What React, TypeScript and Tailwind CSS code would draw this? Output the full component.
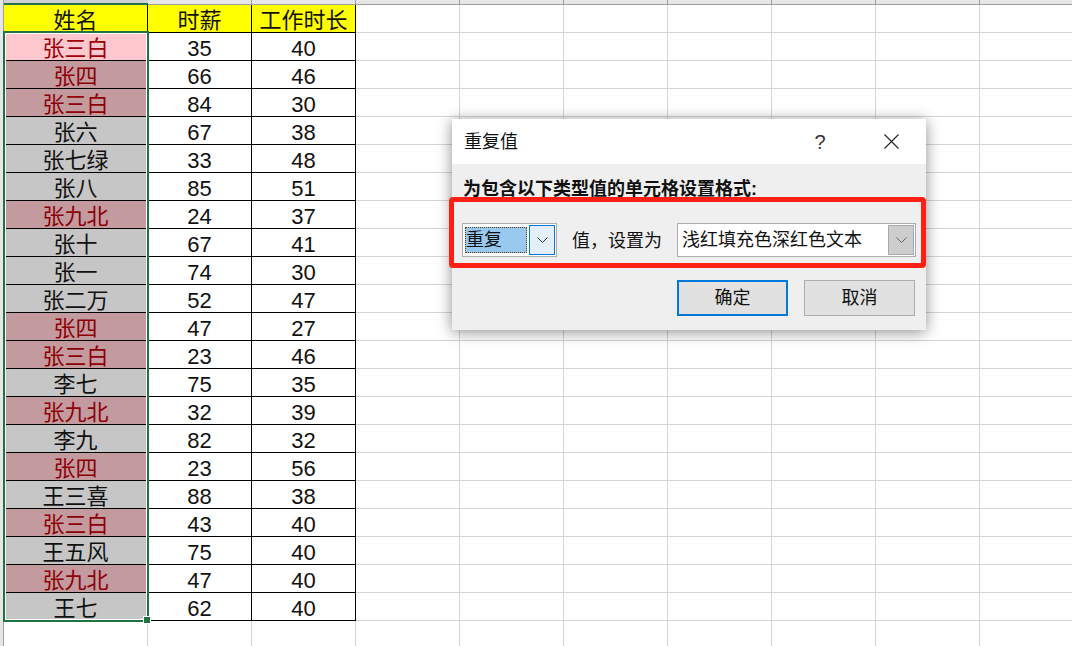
const font = "font-['Liberation_Sans','Noto_Sans_CJK_SC',sans-serif]";

const rows: [string, number, number, string][] = [
  ["张三白", 35, 40, "light"],
  ["张四", 66, 46, "dark"],
  ["张三白", 84, 30, "dark"],
  ["张六", 67, 38, ""],
  ["张七绿", 33, 48, ""],
  ["张八", 85, 51, ""],
  ["张九北", 24, 37, "dark"],
  ["张十", 67, 41, ""],
  ["张一", 74, 30, ""],
  ["张二万", 52, 47, ""],
  ["张四", 47, 27, "dark"],
  ["张三白", 23, 46, "dark"],
  ["李七", 75, 35, ""],
  ["张九北", 32, 39, "dark"],
  ["李九", 82, 32, ""],
  ["张四", 23, 56, "dark"],
  ["王三喜", 88, 38, ""],
  ["张三白", 43, 40, "dark"],
  ["王五风", 75, 40, ""],
  ["张九北", 47, 40, "dark"],
  ["王七", 62, 40, ""],
];

function nameClass(kind: string) {
  if (kind === "light") return "bg-[#ffc7ce] text-[#9c0006]";
  if (kind === "dark") return "bg-[#c39a9e] text-[#8c0006]";
  return "bg-[#c6c6c6] text-[#111]";
}

const cell = "shrink-0 border-r border-b border-black flex items-center justify-center pt-[3px]";

function EmptyCols({ n }: { n: number }) {
  return (
    <>
      {Array.from({ length: n }).map((_, i) => (
        <div key={i} className="w-[104px] shrink-0 border-r border-b border-[#d4d4d4]" />
      ))}
    </>
  );
}

function HeaderStrip() {
  return (
    <div className="flex h-[5px] shrink-0 bg-[#e6e6e6]">
      <div className="w-[144px] shrink-0 bg-[#d2d2d2] border-b-2 border-[#217346]" />
      {Array.from({ length: 9 }).map((_, i) => (
        <div key={i} className="w-[104px] shrink-0 border-r border-b border-[#9f9f9f]" />
      ))}
    </div>
  );
}

function Chevron({ color }: { color: string }) {
  return (
    <svg width="11" height="6" viewBox="0 0 11 6">
      <path d="M0.5 0.5 L5.5 5.5 L10.5 0.5" stroke={color} strokeWidth="1" fill="none" />
    </svg>
  );
}

function Dialog() {
  return (
    <div className="absolute left-[452px] top-[119px] w-[474px] h-[211px] bg-[#efefef] shadow-[0_2px_14px_rgba(0,0,0,0.45)] text-[18px] text-[#111]">
      <div className="h-[45px] bg-white flex items-center pl-[12px] pr-[27px]">
        <span className="flex-1 pt-[2px]">重复值</span>
        <span className="w-[16px] mr-[56px] text-center text-[20px] text-[#333]">?</span>
        <svg width="15" height="15" viewBox="0 0 15 15" className="text-[#222]">
          <path d="M0.5 0.5 L14.5 14.5 M14.5 0.5 L0.5 14.5" stroke="currentColor" strokeWidth="1.1" fill="none" />
        </svg>
      </div>
      <div className="pl-[11px] pt-[16px] h-[33px] font-bold leading-[18px] whitespace-nowrap">
        为包含以下类型值的单元格设置格式:
      </div>
      <div className="ml-[-3px] w-[477px] h-[71px] border-[5px] border-[#fe2015] rounded-[4px] flex items-start pl-[8px] pt-[21px]">
        <div className="w-[95px] h-[34px] border border-[#acacac] bg-white flex items-center pl-[2px] pr-[1px] gap-[2px]">
          <div className="w-[62px] h-[26px] bg-[#99c9ef] border border-dotted border-[#5a3a1a] flex items-center leading-none">重复</div>
          <div className="w-[26px] h-[30px] bg-[#e3f0fb] border border-[#0078d7] flex items-center justify-center">
            <Chevron color="#333" />
          </div>
        </div>
        <span className="ml-[15px] w-[105px] h-[34px] leading-[36px] whitespace-nowrap">值，设置为</span>
        <div className="w-[239px] h-[34px] border border-[#acacac] bg-white flex items-center pl-[4px] pr-[1px]">
          <span className="flex-1 whitespace-nowrap">浅红填充色深红色文本</span>
          <div className="w-[26px] h-[30px] bg-[#cdcdcd] border border-[#a8a8a8] flex items-center justify-center">
            <Chevron color="#666" />
          </div>
        </div>
      </div>
      <div className="flex justify-end gap-[16px] pr-[11px] pt-[12px]">
        <button className="w-[111px] h-[36px] pt-[1px] bg-[#e1e1e1] border-2 border-[#0078d7]">确定</button>
        <button className="w-[111px] h-[36px] pt-[1px] bg-[#e1e1e1] border border-[#adadad]">取消</button>
      </div>
    </div>
  );
}

export default function App() {
  return (
    <div className={`relative flex w-[1072px] h-[646px] overflow-hidden bg-white ${font}`}>
      <div className="w-[4px] shrink-0 bg-[#e6e6e6] border-r border-[#9f9f9f]" />
      <div className="flex flex-col flex-1 min-w-0">
        <HeaderStrip />
        <div className="flex h-[28px] shrink-0 text-[22px] text-[#111]">
          <div className={`w-[144px] bg-[#ffff00] ${cell}`}>姓名</div>
          <div className={`w-[104px] bg-[#ffff00] ${cell}`}>时薪</div>
          <div className={`w-[104px] bg-[#ffff00] ${cell}`}>工作时长</div>
          <EmptyCols n={7} />
        </div>
        {rows.map((r, i) => (
          <div key={i} className="flex h-[28px] shrink-0 text-[22px] text-[#111]">
            <div className={`w-[144px] ${cell} ${nameClass(r[3])}`}>{r[0]}</div>
            <div className={`w-[104px] ${cell}`}>{r[1]}</div>
            <div className={`w-[104px] ${cell}`}>{r[2]}</div>
            <EmptyCols n={7} />
          </div>
        ))}
        <div className="flex h-[28px] shrink-0">
          <div className="w-[144px] shrink-0 border-r border-b border-[#d4d4d4]" />
          <EmptyCols n={9} />
        </div>
      </div>
      {/* selection box over the name column */}
      <div className="absolute left-[3px] top-[31px] w-[146px] h-[591px] border-2 border-[#217346]">
        <div className="w-full h-full border border-white" />
      </div>
      <div className="absolute left-[143px] top-[616px] w-[8px] h-[8px] bg-[#217346] border border-white" />
      <Dialog />
    </div>
  );
}
